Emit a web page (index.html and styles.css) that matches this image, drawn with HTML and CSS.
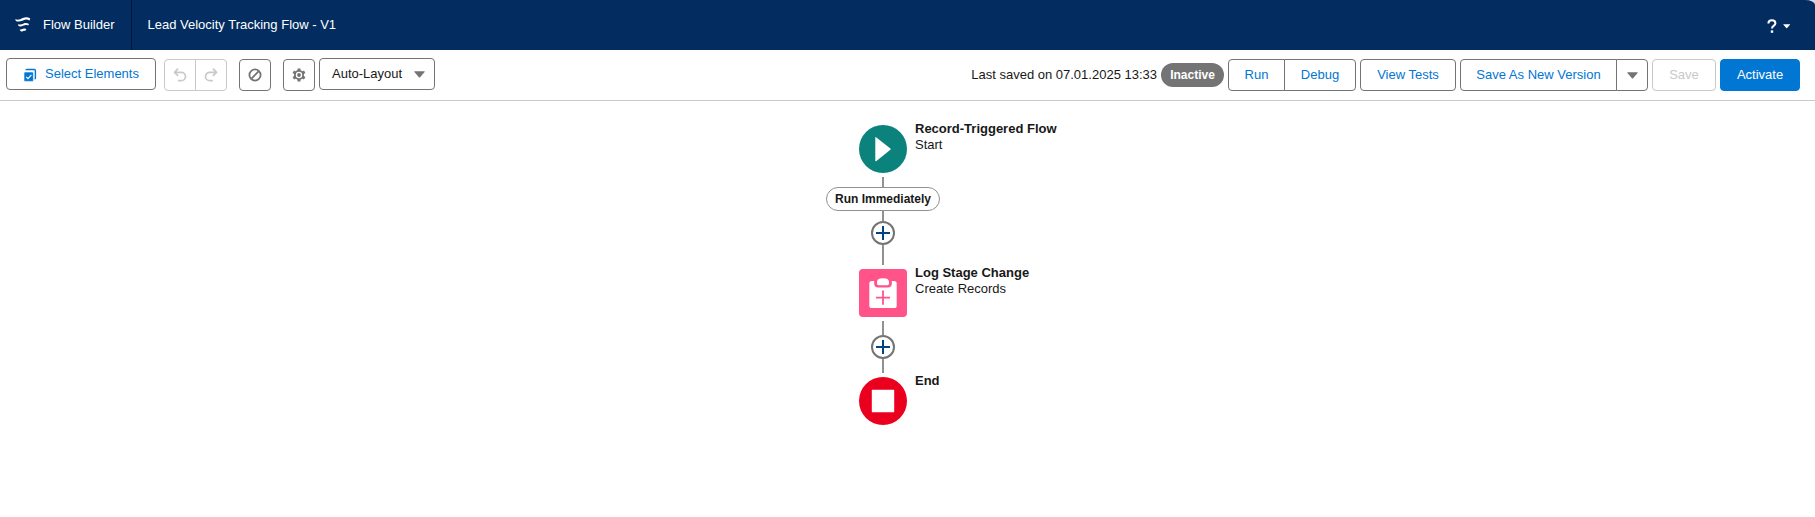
FILE: index.html
```html
<!DOCTYPE html>
<html lang="en">
<head>
<meta charset="utf-8">
<title>Flow Builder</title>
<link rel="stylesheet" href="styles.css">
</head>
<body>
<header class="header">
  <div class="brand">
    <svg class="brand-icon" width="16" height="16" viewBox="0 0 16 16" fill="#fff">
      <path d="M.2 2.1C3 3.4 5.4 2.2 7.8 1 10.4-.2 13 0 15.3 1.6L14.5 3.4C12.2 2.2 10.2 2.4 8 3.4 5.2 4.7 2.6 4.9.9 4z"/>
      <path d="M2.9 7.3C5 8 6.8 7.2 8.6 6.4 10.4 5.7 12.2 5.8 14 6.9L13.2 8.6C11.6 7.8 10 8 8.6 8.6 6.6 9.5 4.8 9.7 3.5 9.1z"/>
      <path d="M4.7 12.4C6.2 12.7 7.2 12.2 8.2 11.7 9.2 11.3 10.4 11.4 11.4 12L10.2 14C9.3 13.6 8.6 13.8 7.9 14.2 6.8 14.8 5.9 14.6 5.4 14.1z"/>
    </svg>
    <span>Flow Builder</span>
  </div>
  <h1 class="title">Lead Velocity Tracking Flow - V1</h1>
  <div class="help">
    <svg width="10" height="14" viewBox="0 0 10 14" fill="none" stroke="#fff" stroke-width="2"><path d="M1.4 4.5C1.4 2.5 2.8 1.3 4.9 1.3S8.4 2.5 8.4 4.2C8.4 6.8 5 6.4 5 9.6"/><path d="M5 11.4v2.4" stroke-width="2.4"/></svg>
    <svg width="8" height="5" viewBox="0 0 8 5"><path d="M.6.3h6.2q.5 0 .2.5L4.1 4.1q-.4.4-.8 0L.4.8Q.1.3.6.3z" fill="#fff"/></svg>
  </div>
</header>
<div class="toolbar">
  <button class="btn select-elements">
    <svg width="14" height="14" viewBox="0 0 14 14"><path d="M3 2.2Q3 1.5 3.8 1.5h7.6q1 0 1 1v7.4q0 .8-.8.8" fill="none" stroke="#0176d3" stroke-width="1.4"/><rect x="1" y="4" width="9.4" height="9.4" rx="1" fill="#0176d3" stroke="#fff" stroke-width=".6"/><path d="M3.2 8.8L5 10.6l3.4-3.7" fill="none" stroke="#fff" stroke-width="1.2"/></svg>
    <span>Select Elements</span>
  </button>
  <div class="group history">
    <button class="btn icon-btn disabled"><svg width="14" height="14" viewBox="0 0 14 14" fill="none" stroke="#c9c9c9" stroke-width="1.7" stroke-linecap="round" stroke-linejoin="round"><path d="M4.6 1.2L1.5 4.3l3.1 3.1M1.7 4.3h6.6a4.2 4.2 0 0 1 0 8.4H5.8"/></svg></button>
    <button class="btn icon-btn disabled"><svg width="14" height="14" viewBox="0 0 14 14" fill="none" stroke="#c9c9c9" stroke-width="1.7" stroke-linecap="round" stroke-linejoin="round"><path d="M9.4 1.2l3.1 3.1-3.1 3.1M12.3 4.3H5.7a4.2 4.2 0 0 0 0 8.4h2.5"/></svg></button>
  </div>
  <button class="btn icon-btn ban"><svg width="14" height="14" viewBox="0 0 14 14" fill="none" stroke="#747474" stroke-width="1.8"><circle cx="7" cy="7" r="5.6"/><path d="M3.2 10.8l7.6-7.6"/></svg></button>
  <button class="btn icon-btn gear"><svg width="14" height="14" viewBox="0 0 14 14" fill="none" stroke="#747474"><circle cx="7" cy="7" r="4.1" stroke-width="1.8"/><circle cx="7" cy="7" r="1.9" fill="#747474" stroke="none"/><path d="M7 .4v2.6M7 11v2.6M1.3 3.7l2.2 1.3M10.5 9l2.2 1.3M1.3 10.3l2.2-1.3M10.5 5l2.2-1.3" stroke-width="3"/></svg></button>
  <button class="btn layout-select"><span>Auto-Layout</span><svg width="11" height="7" viewBox="0 0 11 7"><path d="M.8.2h9.4q.9.1.4.8L6.1 6.2q-.6.6-1.2 0L.4 1Q-.1.3.8.2z" fill="#747474"/></svg></button>
  <span class="saved">Last saved on 07.01.2025 13:33</span>
  <span class="badge">Inactive</span>
  <div class="group">
    <button class="btn run">Run</button>
    <button class="btn debug">Debug</button>
  </div>
  <button class="btn tests">View Tests</button>
  <div class="group">
    <button class="btn save-as">Save As New Version</button>
    <button class="btn icon-btn"><svg class="menu-caret" width="11" height="7" viewBox="0 0 11 7"><path d="M.8.2h9.4q.9.1.4.8L6.1 6.2q-.6.6-1.2 0L.4 1Q-.1.3.8.2z" fill="#747474"/></svg></button>
  </div>
  <button class="btn save disabled">Save</button>
  <button class="btn activate">Activate</button>
</div>
<main class="canvas">
  <div class="node">
    <svg width="48" height="48" viewBox="0 0 48 48"><circle cx="24" cy="24" r="24" fill="#0b827c"/><path d="M16.3 12.9q0-1.4 1.1-.5L31.4 23.6q.6.6 0 1.1L17.4 35.9q-1.1.7-1.1-.6z" fill="#fff"/></svg>
    <div class="label"><b>Record-Triggered Flow</b><span>Start</span></div>
  </div>
  <div class="line first"></div>
  <div class="path-badge">Run Immediately</div>
  <div class="line short"></div>
  <button class="add"><svg width="14" height="14" viewBox="0 0 14 14"><path d="M7 0v14M0 7h14" stroke="#014486" stroke-width="2"/></svg></button>
  <div class="line to-create"></div>
  <div class="node">
    <svg width="48" height="48" viewBox="0 0 48 48"><rect width="48" height="48" rx="4" fill="#ff538a"/><rect x="10.3" y="12" width="27.4" height="27" rx="2.6" fill="#fff"/><path d="M15.2 11.5h17.6v3q0 4-4 4h-9.6q-4 0-4-4z" fill="#ff538a"/><path d="M18 14.6v-1.4q0-3 3-3.6 3-.8 6 0 3 .6 3 3.6v1.4q0 1.6-1.6 1.6h-8.8q-1.6 0-1.6-1.6z" fill="#fff"/><path d="M24 21.5v14.2M17 28.6h14" stroke="#ff538a" stroke-width="1.8"/></svg>
    <div class="label"><b>Log Stage Change</b><span>Create Records</span></div>
  </div>
  <div class="line after-create"></div>
  <button class="add"><svg width="14" height="14" viewBox="0 0 14 14"><path d="M7 0v14M0 7h14" stroke="#014486" stroke-width="2"/></svg></button>
  <div class="line to-end"></div>
  <div class="node">
    <svg width="48" height="48" viewBox="0 0 48 48"><circle cx="24" cy="24" r="24" fill="#ea001e"/><rect x="12.8" y="12.8" width="22.4" height="22.4" rx=".6" fill="#fff"/></svg>
    <div class="label"><b>End</b></div>
  </div>
</main>
</body>
</html>
```

FILE: styles.css
```css
* { box-sizing: border-box; }
body {
  margin: 0;
  height: 517px;
  overflow: hidden;
  background: linear-gradient(#d3dbe6 10px, #fff 10px) no-repeat;
  color: #181818;
  font: 13px/16px "Liberation Sans", Arial, sans-serif;
}
svg { display: block; flex: none; }
.header {
  display: flex;
  height: 50px;
  background: #032d60;
  border-top-right-radius: 10px 5px;
  color: #fff;
}
.brand {
  display: flex;
  align-items: center;
  width: 132px;
  padding-left: 15px;
  gap: 12px;
  border-right: 1px solid #001639;
}
.brand span, .title { margin: 0; padding-bottom: 1px; }
.title {
  align-self: center;
  padding-left: 15.5px;
  font-size: 13px;
  font-weight: 400;
}
.help {
  display: flex;
  align-items: center;
  gap: 6px;
  margin-left: auto;
  padding: 2px 24px 0 0;
}
.toolbar {
  display: flex;
  align-items: flex-start;
  height: 51px;
  padding: 9px 15px 0 6px;
  border-bottom: 1px solid #c9c9c9;
}
.btn {
  display: flex;
  align-items: center;
  justify-content: center;
  height: 32px;
  padding: 0;
  border: 1px solid #747474;
  border-radius: 4px;
  background: #fff;
  color: #0176d3;
  font: inherit;
  white-space: nowrap;
}
.icon-btn { width: 32px; }
.disabled { border-color: #c9c9c9; color: #c9c9c9; }
.group { display: flex; }
.group .btn:first-child { border-radius: 4px 0 0 4px; }
.group .btn:last-child { margin-left: -1px; border-radius: 0 4px 4px 0; }
.select-elements { width: 150px; margin-top: -1px; gap: 8px; }
.select-elements svg { margin-top: 2px; }
.history { margin-left: 8px; }
.ban { margin-left: 12px; }
.gear { margin-left: 12px; }
.layout-select {
  width: 116px;
  margin: -1px 0 0 4px;
  padding: 0 9px 0 12px;
  justify-content: space-between;
  color: #181818;
}
.layout-select svg, .menu-caret { margin-top: 1px; }
.saved { margin: 8px 4px 0 auto; }
.badge {
  width: 63px;
  height: 24px;
  margin: 4px 4px 0 0;
  border-radius: 12px;
  background: #747474;
  color: #fff;
  font-size: 12px;
  font-weight: 700;
  line-height: 24px;
  text-align: center;
}
.run { width: 57px; }
.debug { width: 72px; }
.tests { width: 96px; margin: 0 4px; }
.save-as { width: 157px; }
.save { width: 64px; margin: 0 4px; }
.activate { width: 80px; border-color: #0176d3; background: #0176d3; color: #fff; }
.canvas {
  display: flex;
  flex-direction: column;
  align-items: center;
  width: 114px;
  margin-left: 826px;
  padding-top: 24px;
}
.node {
  display: flex;
  gap: 8px;
  width: 48px;
  height: 48px;
}
.label {
  display: flex;
  flex-direction: column;
  margin-top: -4px;
  white-space: nowrap;
}
.line { width: 2px; background: #919191; }
.first { height: 10px; margin-top: 4px; }
.short { height: 10px; }
.to-create { height: 20px; margin-bottom: 4px; }
.after-create { height: 14px; margin-top: 4px; }
.to-end { height: 14px; margin-bottom: 4px; }
.path-badge {
  width: 114px;
  height: 24px;
  border: 1px solid #919191;
  border-radius: 12px;
  font-size: 12px;
  font-weight: 700;
  line-height: 22px;
  text-align: center;
}
.add {
  display: flex;
  align-items: center;
  justify-content: center;
  width: 24px;
  height: 24px;
  padding: 0;
  border: 2px solid #747474;
  border-radius: 50%;
  background: #fff;
}
```
